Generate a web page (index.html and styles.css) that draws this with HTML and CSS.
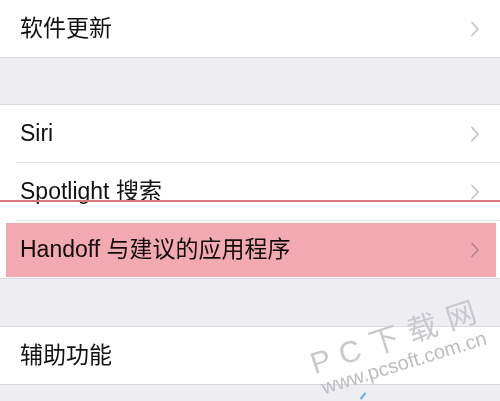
FILE: index.html
```html
<!DOCTYPE html>
<html lang="zh-CN">
<head>
<meta charset="utf-8">
<title>设置</title>
<link rel="stylesheet" href="styles.css">
</head>
<body>
<div class="screen">
  <div class="group first">
    <div class="row"><div class="cell last"><span class="label">软件更新</span><svg class="chev" viewBox="0 0 10 16" width="10" height="16"><path d="M2 1.5 L8 8 L2 14.5"/></svg></div></div>
  </div>
  <div class="group gap1">
    <div class="row"><div class="cell"><span class="label">Siri</span><svg class="chev" viewBox="0 0 10 16" width="10" height="16"><path d="M2 1.5 L8 8 L2 14.5"/></svg></div></div>
    <div class="row"><div class="cell"><span class="label">Spotlight 搜索</span><svg class="chev" viewBox="0 0 10 16" width="10" height="16"><path d="M2 1.5 L8 8 L2 14.5"/></svg></div></div>
    <div class="row"><div class="cell last"><span class="label">Handoff 与建议的应用程序</span><svg class="chev" viewBox="0 0 10 16" width="10" height="16"><path d="M2 1.5 L8 8 L2 14.5"/></svg></div></div>
  </div>
  <div class="group gap2">
    <div class="row"><div class="cell last"><span class="label">辅助功能</span><svg class="chev hidden" viewBox="0 0 10 16" width="10" height="16"><path d="M2 1.5 L8 8 L2 14.5"/></svg></div></div>
  </div>

  <div class="redline"></div>
  <div class="highlight"></div>

  <div class="wm-title">P C 下 载 网</div>
  <div class="wm-url">www.pcsoft.com.cn</div>
  <div class="wm-tick"></div>
</div>
</body>
</html>
```
FILE: styles.css
```css
html, body {
  margin: 0;
  padding: 0;
}
body {
  background: #ededf2;
  font-family: "Liberation Sans", "Noto Sans CJK SC", sans-serif;
  color: #111;
  width: 500px;
  height: 401px;
  overflow: hidden;
}
.screen {
  position: relative;
  width: 500px;
  height: 401px;
  overflow: hidden;
}
.group {
  background: #fff;
  border-top: 1px solid #d9d9de;
  border-bottom: 1px solid #d9d9de;
}
.group.first {
  border-top: none;
}
.group.gap1 {
  margin-top: 46px;
}
.group.gap2 {
  margin-top: 47px;
}
.row {
  padding-left: 16px;
}
.cell {
  height: 57px;
  display: flex;
  align-items: center;
  justify-content: space-between;
  padding-left: 4px;
  padding-right: 20px;
  border-bottom: 1px solid #e2e2e6;
}
.cell.last {
  border-bottom: none;
}
.label {
  font-size: 23px;
  line-height: 1;
}
.chev {
  display: block;
  fill: none;
  stroke: #c4c4c9;
  stroke-width: 1.8;
  stroke-linecap: round;
  stroke-linejoin: round;
}
.chev.hidden {
  visibility: hidden;
}
.redline {
  position: absolute;
  left: 0;
  right: 0;
  top: 200px;
  height: 2px;
  background: #d8767e;
}
.highlight {
  position: absolute;
  left: 6px;
  top: 223px;
  width: 490px;
  height: 54px;
  background: #f2aab0;
  mix-blend-mode: multiply;
}
.wm-title {
  position: absolute;
  left: 316px;
  top: 349px;
  font-family: "Liberation Sans", "Noto Sans CJK SC", sans-serif;
  font-size: 30px;
  line-height: 30px;
  letter-spacing: 1px;
  white-space: nowrap;
  color: #c8c8cf;
  transform: rotate(-18deg);
  transform-origin: 0 100%;
}
.wm-url {
  position: absolute;
  left: 325px;
  top: 377px;
  font-family: "Liberation Sans", sans-serif;
  font-size: 20px;
  line-height: 20px;
  white-space: nowrap;
  color: #bcbcc3;
  transform: rotate(-17deg);
  transform-origin: 0 100%;
}
.wm-tick {
  position: absolute;
  left: 362px;
  top: 392px;
  width: 2px;
  height: 8px;
  background: #6fa9cf;
  transform: rotate(40deg);
}
```
